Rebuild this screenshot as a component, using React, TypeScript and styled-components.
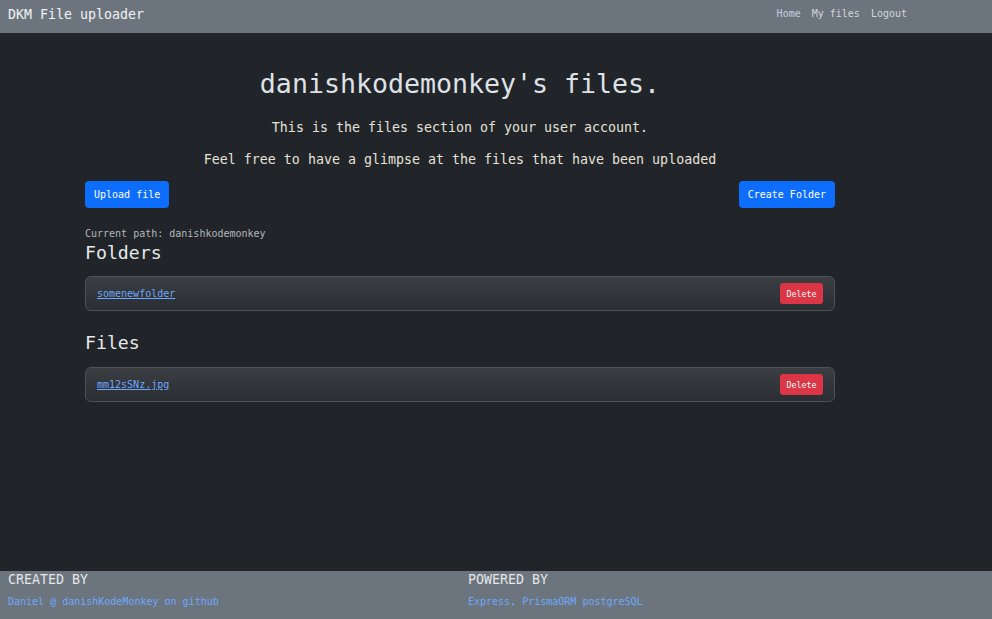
import React from "react";
import styled, { createGlobalStyle } from "styled-components";

const Global = createGlobalStyle`
  html, body { margin: 0; padding: 0; }
  body {
    background: #212529;
    color: #dee2e6;
    font-family: "DejaVu Sans Mono", "Liberation Mono", monospace;
  }
  * { box-sizing: border-box; }
`;

const Page = styled.div`
  min-height: 619px;
  display: flex;
  flex-direction: column;
`;

const NavBar = styled.nav`
  height: 33px;
  background: #6c757d;
  display: flex;
  align-items: center;
  justify-content: space-between;
  padding: 0 85px 4px 8px;
`;

const Brand = styled.span`
  font-size: 13.3px;
  line-height: 16px;
  color: #f1f3f5;
`;

const NavLinks = styled.div`
  display: flex;
  gap: 11px;
  line-height: 12px;
  margin-bottom: 2px;
`;

const NavLink = styled.a<{ $active?: boolean }>`
  font-size: 10px;
  color: ${(p) => (p.$active ? "#c3cfdf" : "#d2d6da")};
  text-decoration: none;
`;

const Main = styled.main`
  flex: 1;
  width: 750px;
  margin-left: 85px;
  padding-top: 35px;
  display: flex;
  flex-direction: column;
`;

const Title = styled.h1`
  margin: 0;
  font-size: 26.6px;
  font-weight: 400;
  line-height: 32px;
  text-align: center;
  color: #dee2e6;
`;

const Lead = styled.p<{ $gap: number }>`
  margin: ${(p) => p.$gap}px 0 0;
  font-size: 13.3px;
  line-height: 20px;
  text-align: center;
  color: #e6e2da;
`;

const Actions = styled.div`
  margin-top: 11px;
  display: flex;
  justify-content: space-between;
`;

const PrimaryButton = styled.button`
  height: 27px;
  padding: 0 9px;
  border: none;
  border-radius: 4px;
  background: #0d6efd;
  color: #ffffff;
  font-family: inherit;
  font-size: 10px;
`;

const PathText = styled.div`
  margin-top: 18px;
  font-size: 10px;
  line-height: 15px;
  color: #b3b6b9;
`;

const SectionTitle = styled.h2<{ $gap: number }>`
  margin: ${(p) => p.$gap}px 0 0;
  font-size: 18.2px;
  font-weight: 400;
  line-height: 22px;
  color: #e6e9ec;
`;

const Card = styled.div<{ $gap: number }>`
  margin-top: ${(p) => p.$gap}px;
  height: 35px;
  border: 1px solid #4d5257;
  border-radius: 6px;
  background: linear-gradient(180deg, #3b3e43 0%, #2a2d31 100%);
  display: flex;
  align-items: center;
  justify-content: space-between;
  padding: 0 11px;
`;

const ItemLink = styled.a`
  font-size: 10px;
  color: #6ea8fe;
  text-decoration: underline;
`;

const DeleteButton = styled.button`
  height: 21px;
  width: 43px;
  padding: 0;
  border: none;
  border-radius: 3px;
  background: #dc3545;
  color: #ffffff;
  font-family: inherit;
  font-size: 8.3px;
`;

const Footer = styled.footer`
  height: 48px;
  background: #6c757d;
  display: grid;
  grid-template-columns: 460px 1fr;
  padding: 1px 8px 0;
`;

const FooterCol = styled.div`
  display: flex;
  flex-direction: column;
`;

const FooterHead = styled.div`
  font-size: 13.3px;
  line-height: 16px;
  color: #e4e6e8;
`;

const FooterText = styled.div`
  margin-top: 8px;
  font-size: 10px;
  line-height: 12px;
  color: #6ea8fe;
`;

const FooterLink = styled.a`
  color: #6ea8fe;
  text-decoration: none;
`;

export default function App() {
  return (
    <>
      <Global />
      <Page>
        <NavBar>
          <Brand>DKM File uploader</Brand>
          <NavLinks>
            <NavLink $active href="#">Home</NavLink>
            <NavLink href="#">My files</NavLink>
            <NavLink href="#">Logout</NavLink>
          </NavLinks>
        </NavBar>
        <Main>
          <Title>danishkodemonkey's files.</Title>
          <Lead $gap={18}>This is the files section of your user account.</Lead>
          <Lead $gap={12}>Feel free to have a glimpse at the files that have been uploaded</Lead>
          <Actions>
            <PrimaryButton>Upload file</PrimaryButton>
            <PrimaryButton>Create Folder</PrimaryButton>
          </Actions>
          <PathText>Current path: danishkodemonkey</PathText>
          <SectionTitle $gap={1}>Folders</SectionTitle>
          <Card $gap={12}>
            <ItemLink href="#">somenewfolder</ItemLink>
            <DeleteButton>Delete</DeleteButton>
          </Card>
          <SectionTitle $gap={21}>Files</SectionTitle>
          <Card $gap={13}>
            <ItemLink href="#">mm12sSNz.jpg</ItemLink>
            <DeleteButton>Delete</DeleteButton>
          </Card>
        </Main>
        <Footer>
          <FooterCol>
            <FooterHead>CREATED BY</FooterHead>
            <FooterText>
              <FooterLink href="#">Daniel @ danishKodeMonkey on github</FooterLink>
            </FooterText>
          </FooterCol>
          <FooterCol>
            <FooterHead>POWERED BY</FooterHead>
            <FooterText>
              <FooterLink href="#">Express</FooterLink>, <FooterLink href="#">PrismaORM</FooterLink>{" "}
              <FooterLink href="#">postgreSQL</FooterLink>
            </FooterText>
          </FooterCol>
        </Footer>
      </Page>
    </>
  );
}
